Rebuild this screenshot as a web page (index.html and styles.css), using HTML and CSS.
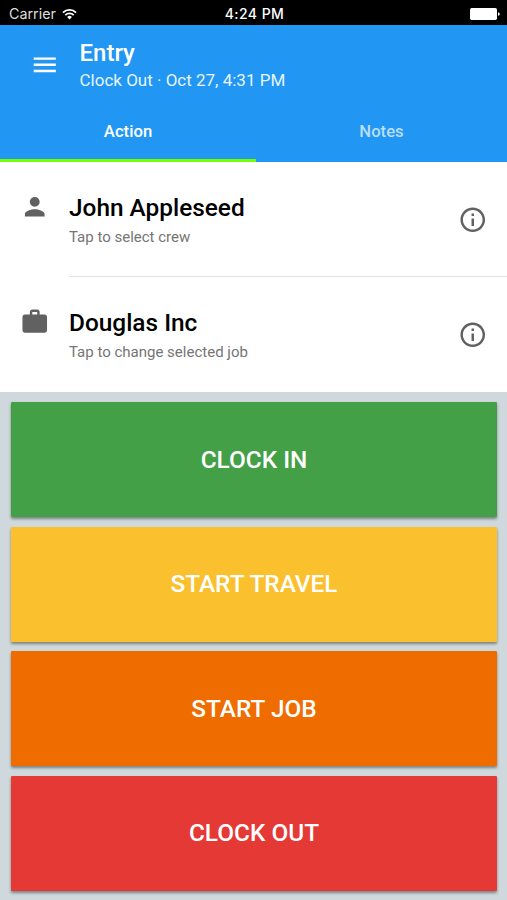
FILE: index.html
```html
<!DOCTYPE html>
<html lang="en">
<head>
<meta charset="utf-8">
<title>Entry</title>
<link rel="stylesheet" href="styles.css">
</head>
<body>
<div class="status">
  <div class="carrier"><span>Carrier</span>
    <svg class="wifi" viewBox="0 0 16 12" fill="none" stroke="#fff" stroke-width="1.9"><path d="M1 4.5a10 10 0 0 1 14 0M3.5 7.1a6.4 6.4 0 0 1 9 0"/><path d="M8 11.8 5.5 9.2a3.6 3.6 0 0 1 5 0z" fill="#fff" stroke="none"/></svg>
  </div>
  <div class="time">4:24 PM</div>
  <div class="power"><svg class="battery" viewBox="0 0 30 12" fill="#fff"><rect width="27" height="12" rx="1.8"/><path d="M28 4.2q1.8.4 1.8 1.8T28 7.8z"/></svg></div>
</div>
<header>
  <div class="bar">
    <svg class="icon menu" viewBox="0 0 24 24"><path d="M3 18h18v-2H3v2zm0-5h18v-2H3v2zm0-7v2h18V6H3z"/></svg>
    <div class="heading"><h1>Entry</h1><p>Clock Out · Oct 27, 4:31 PM</p></div>
  </div>
  <nav><div class="tab active"><span>Action</span></div><div class="tab"><span>Notes</span></div></nav>
</header>
<section class="list">
  <div class="row">
    <svg class="icon lead" viewBox="0 0 24 24"><path d="M12 12c2.21 0 4-1.79 4-4s-1.79-4-4-4-4 1.79-4 4 1.79 4 4 4zm0 2c-2.67 0-8 1.34-8 4v2h16v-2c0-2.66-5.33-4-8-4z"/></svg>
    <div class="body"><div class="text"><h2>John Appleseed</h2><p>Tap to select crew</p></div>
    <svg class="icon info" viewBox="0 0 24 24"><path d="M11 17h2v-6h-2v6zm1-15C6.48 2 2 6.48 2 12s4.48 10 10 10 10-4.48 10-10S17.52 2 12 2zm0 18c-4.41 0-8-3.59-8-8s3.59-8 8-8 8 3.59 8 8-3.59 8-8 8zM11 9h2V7h-2v2z"/></svg></div>
  </div>
  <div class="row">
    <svg class="icon lead" viewBox="0 0 24 24"><path d="M20 6h-4V4c0-1.11-.89-2-2-2h-4c-1.11 0-2 .89-2 2v2H4c-1.11 0-2 .89-2 2v11c0 1.11.89 2 2 2h16c1.11 0 2-.89 2-2V8c0-1.11-.89-2-2-2zm-6 0h-4V4h4v2z"/></svg>
    <div class="body"><div class="text"><h2>Douglas Inc</h2><p>Tap to change selected job</p></div>
    <svg class="icon info" viewBox="0 0 24 24"><path d="M11 17h2v-6h-2v6zm1-15C6.48 2 2 6.48 2 12s4.48 10 10 10 10-4.48 10-10S17.52 2 12 2zm0 18c-4.41 0-8-3.59-8-8s3.59-8 8-8 8 3.59 8 8-3.59 8-8 8zM11 9h2V7h-2v2z"/></svg></div>
  </div>
</section>
<main>
  <button class="green">CLOCK IN</button>
  <button class="yellow">START TRAVEL</button>
  <button class="orange">START JOB</button>
  <button class="red">CLOCK OUT</button>
</main>
</body>
</html>
```
FILE: styles.css
```css
* { box-sizing: border-box; margin: 0; }
body { width: 507px; height: 900px; overflow: hidden; display: flex; flex-direction: column; font-family: Roboto, sans-serif; background: #cfd8dc; }
svg { display: block; flex: none; }
.status { flex: none; height: 25px; background: #000; color: #fff; display: grid; grid-template-columns: 1fr auto 1fr; align-items: center; padding: 2px 7px 0 9px; font: 14.3px/20px Inter, sans-serif; }
.carrier { display: flex; align-items: center; gap: 6px; color: #ddd; }
.wifi { width: 15px; height: 12px; }
.time { font-weight: 500; font-size: 14px; letter-spacing: .45px; }
.power { display: flex; justify-content: flex-end; }
.battery { width: 30px; height: 12px; }
header { flex: none; height: 137px; background: #2196f3; color: #fff; }
.bar { height: 78px; display: flex; padding-left: 30px; }
.icon { width: 29.5px; height: 29.5px; fill: #616161; }
.menu { fill: #fff; margin-top: 25px; }
.heading { margin: 13px 0 0 20px; }
h1 { font-size: 24px; line-height: 30px; font-weight: 500; }
.heading p { font-size: 17px; line-height: 24px; color: #e6f5ff; white-space: nowrap; }
nav { height: 59px; display: flex; }
.tab { width: 256px; text-align: center; font-size: 16.7px; line-height: 57px; font-weight: 500; color: #bbdefb; border-bottom: 3px solid transparent; }
.tab + .tab { width: 251px; }
.active { color: #fff; border-color: #76ff03; }
.list { flex: none; height: 230px; background: #fff; }
.row { height: 115px; display: flex; padding-left: 20px; }
.lead { margin-top: 30px; }
.body { flex: 1; margin-left: 19.5px; display: flex; justify-content: space-between; padding-right: 20px; border-bottom: 1px solid #e4e4e4; }
.row:last-child .body { border: 0; }
.text { padding-top: 30px; white-space: nowrap; }
h2 { font-size: 24.4px; line-height: 32px; font-weight: 500; color: #000; }
.text p { font-size: 15px; line-height: 27px; color: #757575; }
.info { margin-top: 42.5px; }
main { flex: 1; display: flex; flex-direction: column; gap: 9.6px; padding: 10px 10px 0 11px; }
button { height: 115px; flex: none; border: 0; border-radius: 1px; color: #fff; font: 500 24.4px/28px Roboto, sans-serif; box-shadow: 0 2px 3px rgba(0,0,0,.4); }
.green { background: #43a047; }
.yellow { background: #fbc02d; }
.orange { background: #ef6c00; }
.red { background: #e53935; }
```
